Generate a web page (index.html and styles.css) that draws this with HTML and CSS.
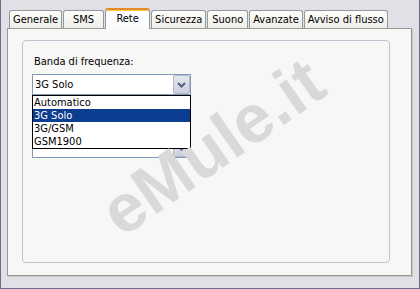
FILE: index.html
```html
<!DOCTYPE html>
<html lang="it">
<head>
    <meta charset="UTF-8">
    <title>Rete</title>
    <link rel="stylesheet" href="styles.css">
</head>
<body>

    <div class="window">
        <div class="tabs">
            <div class="tab">Generale</div>
            <div class="tab">SMS</div>
            <div class="tab active">Rete</div>
            <div class="tab">Sicurezza</div>
            <div class="tab">Suono</div>
            <div class="tab">Avanzate</div>
            <div class="tab">Avviso di flusso</div>
        </div>

        <div class="panel">
            <div class="group">
                <div class="label">Banda di frequenza:</div>
                <div class="combo">
                    <span class="combo-value">3G Solo</span>
                    <span class="combo-btn">
                        <svg width="9" height="6" viewBox="0 0 9 6"><path d="M1 1 L4.5 4.5 L8 1" fill="none" stroke="#4d6185" stroke-width="2"/></svg>
                    </span>
                    <ul class="dropdown">
                        <li>Automatico</li>
                        <li class="selected">3G Solo</li>
                        <li>3G/GSM</li>
                        <li>GSM1900</li>
                    </ul>
                </div>
                <div class="combo combo-second">
                    <span class="combo-value"></span>
                    <span class="combo-btn">
                        <svg width="9" height="6" viewBox="0 0 9 6"><path d="M1 1 L4.5 4.5 L8 1" fill="none" stroke="#4d6185" stroke-width="2"/></svg>
                    </span>
                </div>
            </div>
        </div>

        <div class="watermark">eMule.it</div>
    </div>

</body>
</html>
```

FILE: styles.css
```css
body {
    margin: 0;
    font-family: 'DejaVu Sans Condensed', 'Liberation Sans', sans-serif;
    font-size: 11px;
    color: #000;
}

.window {
    position: relative;
    width: 420px;
    height: 289px;
    box-sizing: border-box;
    background: #e1e0e6;
    border: 1px solid #6d6c8c;
    border-top: none;
    overflow: hidden;
}

.tabs {
    display: flex;
    align-items: flex-end;
    gap: 1px;
    height: 20px;
    margin: 8px 0 0 8px;
}

.tab {
    height: 17px;
    line-height: 17px;
    min-width: 33px;
    padding: 0 3px;
    text-align: center;
    white-space: nowrap;
    background: linear-gradient(#fdfdfc, #eeede7);
    border: 1px solid #919b9c;
    border-bottom: none;
    border-radius: 3px 3px 0 0;
}

.tab.active {
    position: relative;
    z-index: 1;
    min-width: 37px;
    height: 19px;
    line-height: 18px;
    margin-bottom: -1px;
    background: #fcfcfe;
    border-top: 2px solid #e68b2c;
    box-shadow: inset 0 1px 0 #ffc73c;
}

.panel {
    height: 248px;
    box-sizing: border-box;
    margin: 0 7px 12px 6px;
    padding: 11px 21px 12px 14px;
    background: #f7f7f5;
    border: 1px solid #919b9c;
    box-shadow: 1px 1px 0 #c9c8c0;
}

.group {
    height: 223px;
    box-sizing: border-box;
    padding: 14px 0 0 9px;
    border: 1px solid #c5c2cf;
    border-radius: 4px;
}

.label {
    height: 13px;
    line-height: 13px;
    padding-left: 2px;
}

.combo {
    position: relative;
    display: flex;
    width: 159px;
    height: 21px;
    box-sizing: border-box;
    margin-top: 6px;
    background: #fff;
    border: 1px solid #7f9db9;
}

.combo-second {
    margin-top: 42px;
}

.combo-value {
    flex: 1;
    line-height: 19px;
    padding-left: 2px;
}

.combo-btn {
    display: flex;
    align-items: center;
    justify-content: center;
    width: 17px;
    box-sizing: border-box;
    background: linear-gradient(#e4e5ee, #cfd0dc);
    border: 1px solid #b3b5c8;
    border-radius: 2px;
}

.dropdown {
    position: absolute;
    z-index: 2;
    top: calc(100% + 1px);
    left: -1px;
    width: 159px;
    box-sizing: border-box;
    margin: 0;
    padding: 0;
    list-style: none;
    background: #fff;
    border: 1px solid #000;
}

.dropdown li {
    height: 13px;
    line-height: 13px;
    padding-left: 1px;
}

.dropdown li.selected {
    background: #0b3d91;
    color: #fff;
}

.watermark {
    position: absolute;
    left: 211px;
    top: 146px;
    z-index: 3;
    transform: translate(-50%, -50%) rotate(-35deg);
    font-family: 'Liberation Sans', sans-serif;
    font-size: 68px;
    font-weight: bold;
    color: #d9d9d9;
    white-space: nowrap;
    pointer-events: none;
}
```
